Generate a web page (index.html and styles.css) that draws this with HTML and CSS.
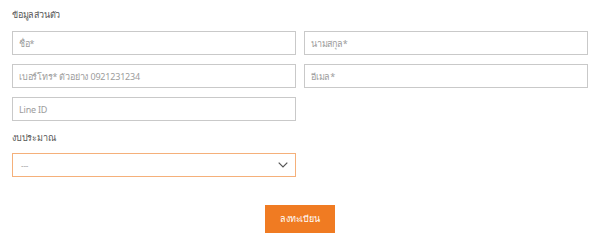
FILE: index.html
```html
<!DOCTYPE html>
<html lang="th">
<head>
<meta charset="utf-8">
<link rel="stylesheet" href="styles.css">
</head>
<body>
<form class="form">
  <div class="title">ข้อมูลส่วนตัว</div>
  <div class="grid">
    <input class="field" type="text" placeholder="ชื่อ*">
    <input class="field" type="text" placeholder="นามสกุล*">
    <input class="field" type="text" placeholder="เบอร์โทร* ตัวอย่าง 0921231234">
    <input class="field" type="text" placeholder="อีเมล*">
    <input class="field" type="text" placeholder="Line ID">
  </div>
  <div class="label">งบประมาณ</div>
  <div class="select">
    <span class="select-text">---</span>
    <svg class="chev" width="10" height="6" viewBox="0 0 10 6"><path d="M0.7 0.7 L5 5 L9.3 0.7" fill="none" stroke="#555" stroke-width="1.2"/></svg>
  </div>
  <div class="actions">
    <button class="btn" type="button">ลงทะเบียน</button>
  </div>
</form>
</body>
</html>
```
FILE: styles.css
```css
* { box-sizing: border-box; }
body {
  margin: 0;
  background: #fff;
  font-family: "Noto Sans", "Open Sans", sans-serif;
  font-size: 9px;
  letter-spacing: -0.2px;
  color: #444;
}
.form {
  padding: 7px 12px 0 12px;
  width: 600px;
}
.title {
  line-height: 16px;
  height: 16px;
  margin-bottom: 8px;
  color: #555;
}
.grid {
  display: grid;
  grid-template-columns: 284px 284px;
  column-gap: 8px;
  row-gap: 9px;
}
.field {
  height: 24px;
  border: 1px solid #c9c9c9;
  background: #fff;
  padding: 0 6px;
  font-family: inherit;
  font-size: 9px;
  letter-spacing: -0.2px;
  outline: none;
  margin: 0;
}
.field::placeholder { color: #9c9c9c; }
.label {
  margin-top: 9px;
  line-height: 16px;
  height: 16px;
  color: #555;
}
.select {
  margin-top: 7px;
  width: 284px;
  height: 24px;
  border: 1px solid #f5b07a;
  display: flex;
  align-items: center;
  justify-content: space-between;
  padding: 0 7px 0 8px;
}
.select-text { color: #aaa; font-size: 8px; }
.chev { display: block; }
.actions {
  display: flex;
  justify-content: center;
  margin-top: 28px;
}
.btn {
  width: 70px;
  height: 28px;
  border: 0;
  background: #f07b22;
  color: #fff;
  font-family: inherit;
  font-size: 9px;
  letter-spacing: -0.2px;
  padding: 0;
}
```
